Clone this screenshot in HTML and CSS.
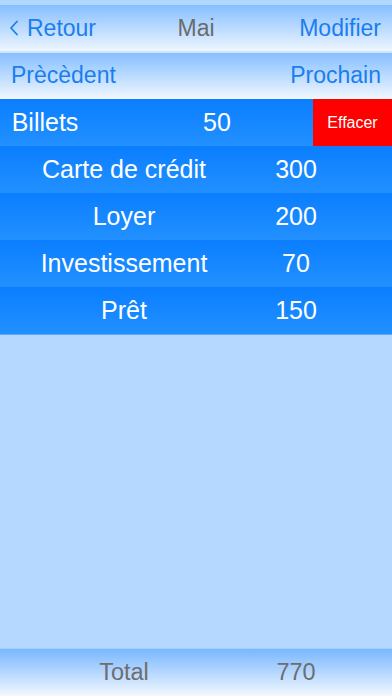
FILE: index.html
```html
<!DOCTYPE html>
<html lang="fr">
<head>
    <meta charset="UTF-8">
    <meta name="viewport" content="width=device-width, initial-scale=1.0">
    <title>Mai</title>
    <link rel="stylesheet" href="styles.css">
</head>
<body>
    <div class="screen">
        <div class="statusBar"></div>
        <div class="navBar">
            <a class="navLink back">
                <svg class="chevron" width="10" height="16" viewBox="0 0 10 16">
                    <path d="M7 1.5 L1 8 L7 14.5" fill="none" stroke="#1a7ef0" stroke-width="1.8" stroke-linecap="round" stroke-linejoin="round"/>
                </svg>
                Retour
            </a>
            <span class="navTitle">Mai</span>
            <a class="navLink right">Modifier</a>
        </div>
        <div class="subBar">
            <a class="navLink">Prècèdent</a>
            <a class="navLink">Prochain</a>
        </div>

        <div class="list">
            <div class="row swiped">
                <div class="rowContent">
                    <span class="name">Billets</span>
                    <span class="value">50</span>
                </div>
                <div class="deleteBtn">Effacer</div>
            </div>
            <div class="row">
                <div class="rowContent">
                    <span class="name">Carte de crédit</span>
                    <span class="value">300</span>
                </div>
            </div>
            <div class="row">
                <div class="rowContent">
                    <span class="name">Loyer</span>
                    <span class="value">200</span>
                </div>
            </div>
            <div class="row">
                <div class="rowContent">
                    <span class="name">Investissement</span>
                    <span class="value">70</span>
                </div>
            </div>
            <div class="row">
                <div class="rowContent">
                    <span class="name">Prêt</span>
                    <span class="value">150</span>
                </div>
            </div>
        </div>

        <div class="totalBar">
            <span class="name">Total</span>
            <span class="value">770</span>
        </div>
    </div>
</body>
</html>
```

FILE: styles.css
```css
* {
    box-sizing: border-box;
}

body {
    margin: 0;
    font-family: "Liberation Sans", Arial, Helvetica, sans-serif;
    background-color: #b4d8ff;
}

.screen {
    width: 392px;
    height: 696px;
    display: flex;
    flex-direction: column;
    overflow: hidden;
    background-color: #b4d8ff;
}

.statusBar {
    height: 5px;
    background-color: #b2d7ff;
}

.navBar,
.subBar {
    display: flex;
    align-items: center;
    justify-content: space-between;
    padding: 0 11px 0 10px;
    background-image: linear-gradient(to bottom, #86bfff, #eef6ff);
}

.navBar {
    position: relative;
    height: 48px;
    border-bottom: 2px solid #cfe4ff;
}

.subBar {
    height: 46px;
    padding-left: 11px;
    border-bottom: 1px solid #f4f9ff;
}

.navLink {
    display: flex;
    align-items: center;
    color: #1a7ef0;
    font-size: 23px;
    text-decoration: none;
}

.back .chevron {
    margin-right: 7px;
}

.navTitle {
    position: absolute;
    left: 50%;
    transform: translateX(-50%);
    color: #6b6b6b;
    font-size: 23px;
}

.list {
    flex: 1;
}

.row {
    position: relative;
    height: 47px;
    overflow: hidden;
    background-image: linear-gradient(to bottom, #0a7eff, #2290ff);
}

.row:last-child {
    height: 48px;
    border-bottom: 1px solid #5aa9ff;
}

.rowContent {
    display: grid;
    grid-template-columns: 248px 96px 1fr;
    align-items: center;
    height: 100%;
    color: white;
    font-size: 25px;
}

.name,
.value {
    text-align: center;
}

.swiped .rowContent {
    transform: translateX(-79px);
}

.deleteBtn {
    position: absolute;
    top: 0;
    right: 0;
    width: 79px;
    height: 100%;
    display: flex;
    align-items: center;
    justify-content: center;
    background-color: #ff0000;
    color: white;
    font-size: 16px;
}

.totalBar {
    display: grid;
    grid-template-columns: 248px 96px 1fr;
    align-items: center;
    height: 48px;
    border-top: 1px solid #a6ceff;
    background-image: linear-gradient(to bottom, #79b7ff, #f2f8ff);
    color: #6e6e6e;
    font-size: 23.5px;
}
```
